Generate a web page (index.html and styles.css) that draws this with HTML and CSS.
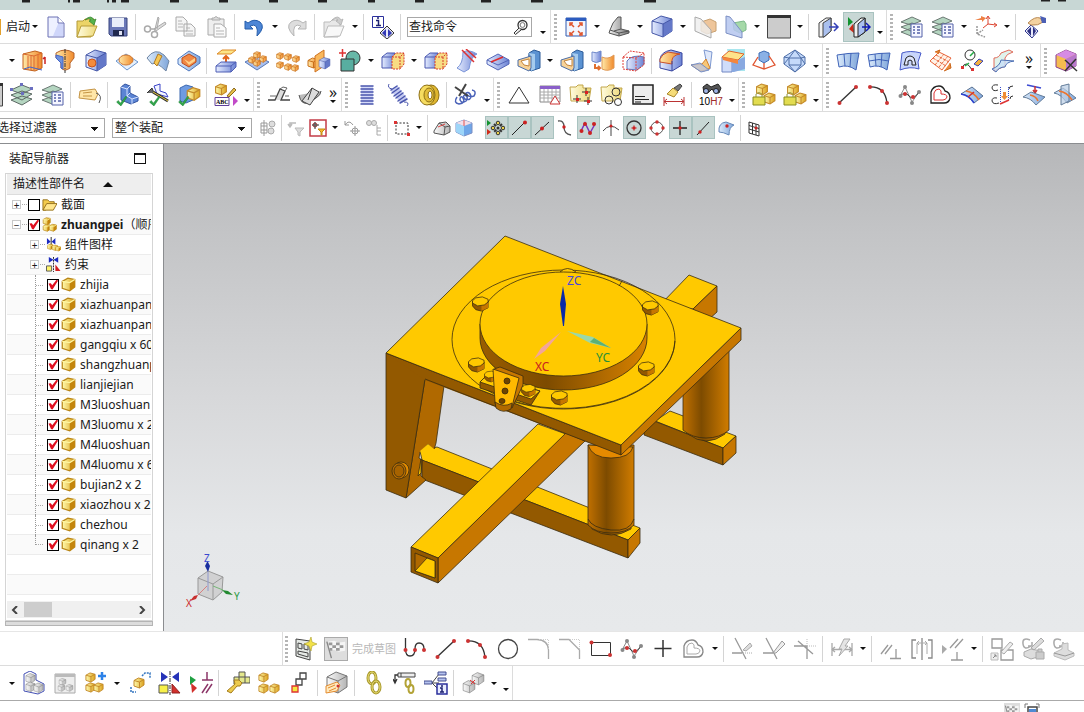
FILE: index.html
```html
<!DOCTYPE html>
<html lang="zh-CN">

<head>
    <meta charset="UTF-8">
    <title>装配</title>
    <link rel="stylesheet" href="styles.css">
</head>

<body>
    <svg class="sprite" aria-hidden="true">
        <defs>
            <linearGradient id="gb"><stop offset="0" stop-color="#e6edff"/><stop offset="1" stop-color="#6c83d4"/></linearGradient>
            <linearGradient id="gc"><stop offset="0" stop-color="#dcebfb"/><stop offset="1" stop-color="#7fa6da"/></linearGradient>
            <linearGradient id="gy"><stop offset="0" stop-color="#fffbb0"/><stop offset="1" stop-color="#dba21c"/></linearGradient>
            <linearGradient id="gf"><stop offset="0" stop-color="#fffce0"/><stop offset="1" stop-color="#edd978"/></linearGradient>
            <linearGradient id="go"><stop offset="0" stop-color="#ffe9a8"/><stop offset="1" stop-color="#f08a2c"/></linearGradient>
            <linearGradient id="gs"><stop offset="0" stop-color="#fafafa"/><stop offset="1" stop-color="#b5b5b5"/></linearGradient>
            <linearGradient id="gd"><stop offset="0" stop-color="#eeeeee"/><stop offset="1" stop-color="#777777"/></linearGradient>
            <linearGradient id="cyl"><stop offset="0" stop-color="#c07000"/><stop offset=".4" stop-color="#7d4b00"/><stop offset="1" stop-color="#d07c00"/></linearGradient>
            <linearGradient id="rim"><stop offset="0" stop-color="#9a5d00"/><stop offset=".4" stop-color="#7d4b00"/><stop offset="1" stop-color="#d88200"/></linearGradient>
        </defs>

        <!-- cubes, used by many of the other icons -->
        <symbol id="bc" viewBox="0 0 24 24"><path d="M2 6 11 1 22 4V16L13 22 2 18Z" fill="url(#gb)" stroke="#4658a8"/><path d="M13 9 22 4V16L13 22Z" fill="#6478c8"/><path d="M2 6 13 9 22 4M13 9V22" fill="none" stroke="#4658a8"/></symbol>
        <symbol id="yc" viewBox="0 0 24 24"><path d="M2 7 11 2 22 4V16L14 22 2 18Z" fill="url(#gy)" stroke="#b98616" stroke-width="2"/><path d="M14 9 22 4V16L14 22Z" fill="#c4850c"/><path d="M2 7 14 9 22 4" fill="none" stroke="#fff7a0" stroke-width="2"/></symbol>
        <symbol id="oc" viewBox="0 0 24 24"><path d="M2 7 11 2 22 5V16L13 22 2 18Z" fill="url(#go)" stroke="#c8701a" stroke-width="2"/><path d="M2 7 13 10 22 5M13 10V22" fill="none" stroke="#c8701a" stroke-width="2"/></symbol>
        <symbol id="pc" viewBox="0 0 24 24"><path d="M2 7 11 2 22 5V16L13 22 2 18Z" fill="url(#gy)" stroke="#c48a2a" stroke-width="2"/><path d="M2 7 13 10 22 5M13 10V22" fill="none" stroke="#c48a2a" stroke-width="2"/></symbol>
        <symbol id="sc" viewBox="0 0 24 24"><path d="M2 6 11 1 22 5V16L13 22 2 18Z" fill="url(#gs)" stroke="#777"/><path d="M2 6 13 10 22 5M13 10V22" fill="none" stroke="#777"/></symbol>
        <symbol id="mark" viewBox="0 0 24 24"><path d="M3 15 6 12 10 17 20 4 22 6 11 22Z" fill="#2fa84a" stroke="#1c7c33"/></symbol>

        <!-- standard bar -->
        <symbol id="new" viewBox="0 0 24 24"><path d="M4 2H14L20 8V22H4Z" fill="#eef1ff" stroke="#6a70b4"/><path d="M14 9 19 8V21H9Z" fill="#cfd6fa"/><path d="M14 2V8H20" fill="#fff" stroke="#6a70b4"/></symbol>
        <symbol id="open" viewBox="0 0 24 24"><path d="M2 6H8L10 4H19V12L16 22H2Z" fill="#ecd468" stroke="#b39a3a"/><path d="M6 11H22L18 21 2 22Z" fill="url(#gf)" stroke="#b89c38"/><path d="M10 5Q16-1 19 5L21 4 19 10 14 6 16 5Q14 2 10 5" fill="#56b24c" stroke="#327f2c" stroke-width=".7"/></symbol>
        <symbol id="save" viewBox="0 0 24 24"><path d="M3 3H21V21H5L3 19Z" fill="#6a78b8" stroke="#39457f"/><path d="M6 3H18V12H6Z" fill="#e9eefa"/><path d="M7 15H18V21H7Z" fill="#20294f"/><path d="M13 16H16V20H13Z" fill="#dfe3f4"/></symbol>
        <symbol id="cut" viewBox="0 0 24 24"><path d="M12 14 15 2 16 3 14 14M11 14 22 7 23 9 13 16" fill="#ddd" stroke="#aaa"/><circle cx="4.5" cy="14" r="3" fill="none" stroke="#aaa" stroke-width="1.5"/><circle cx="11.5" cy="19.5" r="3" fill="none" stroke="#aaa" stroke-width="1.5"/><path d="M7 14H12V17" fill="none" stroke="#aaa" stroke-width="1.5"/></symbol>
        <symbol id="copy" viewBox="0 0 24 24"><path d="M2 2H9L13 6V16H2ZM10 9H17L21 13V21H10Z" fill="#f5f5f5" stroke="#aaa"/><path d="M4 6H8M4 9H9M4 12H9M12 13H16M12 16H19M12 19H19" stroke="#b5b5b5"/></symbol>
        <symbol id="paste" viewBox="0 0 24 24"><path d="M3 4H19V20H3Z" fill="#eee" stroke="#aaa"/><path d="M7 5V3H9Q11 0 13 3H15V5Z" fill="#ddd" stroke="#aaa"/><path d="M9 9H16L21 13V22H9Z" fill="#fafafa" stroke="#aaa"/><path d="M11 13H15M11 16H19M11 19H19" stroke="#b5b5b5"/></symbol>
        <symbol id="undo" viewBox="0 0 24 24"><path d="M3 6V14H11L8 11Q17 7 15 21 24 12 18 7 12 3 6 8Z" fill="#4d86d6" stroke="#245caa"/></symbol>
        <symbol id="redo" viewBox="0 0 24 24"><path d="M21 6V14H13L16 11Q7 7 9 21 0 12 6 7 12 3 18 8Z" fill="#ddd" stroke="#b5b5b5"/></symbol>
        <symbol id="open-off" viewBox="0 0 24 24"><path d="M2 7H8L10 5H18V12L16 22H2Z" fill="#e8e8e8" stroke="#bbb"/><path d="M6 11H22L18 21 2 22Z" fill="#f8f8f8" stroke="#bbb"/><path d="M10 5Q16-1 19 5L21 4 19 10 14 6 16 5Q14 2 10 5" fill="#ccc" stroke="#aaa" stroke-width=".7"/></symbol>
        <symbol id="info" viewBox="0 0 24 24"><path d="M1.5 1.5H12.5V12.5H1.5Z" fill="#fff" stroke="#2a2f9c"/><path d="M5 5.5H7.500V10M5 10.5H10M6 3H8" fill="none" stroke="#1c2070" stroke-width="1.5"/><path d="M16 11 23 18 16 24 9 18Z" fill="#e6e8fa" stroke="#333"/><path d="M15 14V22L11 18ZM17 14V22L21 18Z" fill="#3238b4"/></symbol>
        <symbol id="find" viewBox="0 0 16 16"><circle cx="9.5" cy="6" r="4.5" fill="#fff" stroke="#333" stroke-width="1.3"/><circle cx="9.5" cy="6" r="2.4" fill="none" stroke="#777"/><path d="M6 9 1 14 2.5 15.5 8 11" fill="#eee" stroke="#333"/></symbol>
        <symbol id="fit" viewBox="0 0 24 24"><path d="M2 3H22V21H2Z" fill="#f2f5fd" stroke="#315bb0"/><path d="M2 3H22V6H2Z" fill="#2c5cc0"/><path d="M7 9 10 12M17 9 14 12M7 19 10 16M17 19 14 16M6 11V8H9M15 8H18V11M6 17V20H9M15 20H18V17" fill="none" stroke="#e0542c" stroke-width="1.5"/></symbol>
        <symbol id="shade" viewBox="0 0 24 24"><path d="M3 15 6 8 11 2 14 2V14L22 16V18L12 21 2 18Z" fill="url(#gd)" stroke="#555"/><path d="M3 15 12 18 22 16M14 14 7 16M12 18V21" fill="none" stroke="#555"/></symbol>
        <symbol id="clip" viewBox="0 0 24 24"><path d="M8 7 17 4 23 7V16L14 19 8 16Z" fill="#eec59a" stroke="#c8a070"/><path d="M2 2 8 4 18 15V23L2 16Z" fill="#eee" fill-opacity=".8" stroke="#aaa"/></symbol>
        <symbol id="clip2" viewBox="0 0 24 24"><path d="M9 8 20 6 22 9V15L16 18 10 15Z" fill="#a5d9a8" stroke="#7db98a"/><path d="M2 1 6 2 18 17V23L2 18Z" fill="#b5c5ee" fill-opacity=".85" stroke="#7d90c4"/></symbol>
        <symbol id="window" viewBox="0 0 24 24"><path d="M.5 1H23.5V23H.5Z" fill="#ccc" stroke="#444"/><path d="M0 0H24V3H0Z" fill="#333"/></symbol>
        <symbol id="plane" viewBox="0 0 24 24"><path d="M3 8 10 3H15V16L8 22H3Z" fill="#f0f0f0" stroke="#444"/><path d="M7 8 15 3V16L8 22H7Z" fill="#aac0ee" stroke="#444"/><path d="M13 12H22M18 8 22 12 18 16" fill="none" stroke="#3440b8" stroke-width="1.5"/></symbol>
        <symbol id="plane-on" viewBox="0 0 24 24"><path d="M1 2 6 7 1 11Z" fill="#12932f"/><path d="M6 9 2 14 7 18Z" fill="#d02a18"/><path d="M7 9 14 3H18V17L11 22H7Z" fill="#f0f0f0" stroke="#222"/><path d="M11 9 18 3V17L11 22Z" fill="#aac0ee" stroke="#222"/><path d="M15 12H23M19 8 23 12 19 16" fill="none" stroke="#1018b8" stroke-width="1.5"/></symbol>
        <symbol id="layers" viewBox="0 0 24 24"><path d="M1 17 12 13 21 16 11 21ZM1 12 12 8 21 11 11 16ZM1 7 12 2 21 6 11 10Z" fill="#b4d5c0" stroke="#6c7974"/><path d="M11 9H22V22H11Z" fill="#f5f6ff" stroke="#5360a8"/><path d="M13 12H15M13 15H15M13 18H15M17 12H20M17 15H20M17 18H20" stroke="#5360a8" stroke-width="1.5"/></symbol>
        <symbol id="stack" viewBox="0 0 24 24"><path d="M1 17 12 13 22 16 12 22ZM1 12 12 8 22 11 12 17ZM1 7 12 2 22 6 12 11Z" fill="#b4d5c0" stroke="#5c6964"/><path d="M0 5H3V8H0ZM10 0H13V3H10ZM20 4H23V7H20ZM11 9H14V12H11Z" fill="#6a6fc0"/></symbol>
        <symbol id="csys" viewBox="0 0 24 24"><path d="M14 2V9L22 10M14 9 9 13M12 4 14 1 16 4M20 8 23 10 20 12" fill="none" stroke="#dc4430"/><path d="M3 11V19L11 22M3 19 9 15" fill="none" stroke="#999" stroke-width="1.5" stroke-dasharray="2 1"/><path d="M1 5 7 3V1L12 3 8 7V5Z" fill="#ee8044"/></symbol>
        <symbol id="touch" viewBox="0 0 24 24"><path d="M8 10 15 16 9 23 2 16Z" fill="#e9ebfc" stroke="#333a90"/><path d="M8 12V21L4 16ZM10 12V21L13 16Z" fill="#2c3080"/><path d="M5 8Q12 1 17 3L20 7Q15 11 8 10Z" fill="#f4d2a0" stroke="#b98a55"/><path d="M17 1 23 3V8L19 8Z" fill="#4c5fb4"/></symbol>

        <!-- feature bar -->
        <symbol id="extrude" viewBox="0 0 24 24"><path d="M1 5 13 2 20 4V19L13 22 1 20Z" fill="url(#go)" stroke="#c2601c"/><path d="M1 5 12 7 20 4M6 7V21M9 7V21M12 7V21M16 6V20" fill="none" stroke="#dc6830"/><path d="M2 20 8 18 20 21" stroke="#4464c8" fill="none"/><path d="M23 15V8M21 10 23 8" stroke="#c22" stroke-width="1.5"/></symbol>
        <symbol id="revolve" viewBox="0 0 24 24"><path d="M3 4Q12-2 21 4V9L17 14V19Q12 23 8 19V14L3 9Z" fill="url(#go)" stroke="#b8642b"/><path d="M3 6 10 8V20L8 19V14L3 9Z" fill="#6f92dc" stroke="#4464c8"/><path d="M12 0V24" stroke="#333" stroke-dasharray="4 1 1 1"/></symbol>
        <symbol id="hole" viewBox="0 0 24 24"><use href="#bc"/><circle cx="8" cy="14" r="4" fill="#f58c3c" stroke="#c9541c"/></symbol>
        <symbol id="boss" viewBox="0 0 24 24"><path d="M1 12 11 5 23 13 12 21Z" fill="#e4f0fd" stroke="#6a94cc"/><ellipse cx="11" cy="11" rx="7" ry="5" fill="url(#go)" stroke="#d07830"/></symbol>
        <symbol id="slot" viewBox="0 0 24 24"><path d="M1 9Q9-2 18 6L23 12 20 22Q10 12 6 15Z" fill="url(#gc)" stroke="#6f86a4"/><path d="M12 5 16 7 11 17 8 14Z" fill="#f7c752" stroke="#ae7a22"/></symbol>
        <symbol id="emboss" viewBox="0 0 24 24"><path d="M1 10 12 2 23 8V14L12 22 1 15Z" fill="url(#gc)" stroke="#4f78c0"/><path d="M5 9 12 5 19 9V13L12 18 5 14Z" fill="#f08844" stroke="#c04c1c"/><path d="M7 10 12 13 18 9V12L12 16Z" fill="#ffd288"/></symbol>
        <symbol id="offset" viewBox="0 0 24 24"><path d="M3 5 8 1H22L17 5Z" fill="#fce486" stroke="#dd8a28"/><path d="M12 15V8M9 10 12 7 15 10" fill="none" stroke="#e2651c" stroke-width="2"/><path d="M2 17 7 13H22V18L17 23H2Z" fill="url(#gb)" stroke="#4f5fb5"/><path d="M2 17H17L22 13M17 17V23" fill="none" stroke="#4f5fb5"/></symbol>
        <symbol id="pattern" viewBox="0 0 24 24"><path d="M0 13 12 7 24 13 12 21Z" fill="#a9c0ee" stroke="#5878b8"/><use href="#oc" x="8" y="2" width="8" height="8"/><use href="#oc" x="3" y="7" width="8" height="8"/><use href="#oc" x="14" y="6" width="8" height="8"/><use href="#oc" x="8" y="10" width="8" height="8"/></symbol>
        <symbol id="array" viewBox="0 0 24 24"><use href="#oc" x="0" y="3" width="8" height="8"/><use href="#oc" x="8" y="4" width="8" height="8"/><use href="#oc" x="16" y="6" width="8" height="8"/><use href="#oc" x="0" y="12" width="8" height="8"/><use href="#oc" x="8" y="14" width="8" height="8"/><use href="#oc" x="15" y="15" width="8" height="8"/></symbol>
        <symbol id="mirror" viewBox="0 0 24 24"><use href="#oc" x="0" y="8" width="12" height="12"/><path d="M8 7 17 1V17L8 23Z" fill="#f9b85c" stroke="#cf7220"/><use href="#bc" x="11" y="8" width="13" height="13"/></symbol>
        <symbol id="unite" viewBox="0 0 24 24"><circle cx="15" cy="9" r="7" fill="#68b8a8" stroke="#333"/><path d="M3 10H16V22H3Z" fill="#58aea0" stroke="#333"/><path d="M1 4H8M4.5 0V8" stroke="#d33" stroke-width="1.5"/></symbol>
        <symbol id="trim" viewBox="0 0 24 24"><path d="M1 8 6 4H14V19H1Z" fill="url(#gb)" stroke="#4a58b0"/><path d="M1 8H12" stroke="#4a58b0"/><path d="M11 8 15 4H23V15L19 20H11Z" fill="#f8dc83" stroke="#d63c2c" stroke-dasharray="2 1"/><path d="M11 8H19L23 4M19 8V20" fill="none" stroke="#d63c2c" stroke-dasharray="2 1"/></symbol>
        <symbol id="split" viewBox="0 0 24 24"><path d="M8 3Q14 0 22 5 16 7 14 20L9 23 2 19Q8 15 8 3Z" fill="url(#gb)" stroke="#7a94d8"/><path d="M7 1 19 13M11 0 21 9" stroke="#d33" stroke-width="1.5"/></symbol>
        <symbol id="divide" viewBox="0 0 24 24"><path d="M1 11 12 5 23 11V15L12 21 1 15Z" fill="url(#gb)" stroke="#5366b8"/><path d="M1 11 12 16 23 11" fill="none" stroke="#5366b8"/><path d="M5 13 17 8" stroke="#e02a2a" stroke-width="1.5"/></symbol>
        <symbol id="shell" viewBox="0 0 24 24"><path d="M12 4 17 1 23 3V19L14 22 11 18Z" fill="#5b92d2" stroke="#2c5b98"/><path d="M12 4 18 5V20L14 22V10Z" fill="#a5cbee"/><path d="M1 11 14 7V19L12 22 1 17Z" fill="#f7d298" stroke="#4b6ea8"/><path d="M4 12 12 10V17L7 16Z" fill="#fff" stroke="#c2843c"/></symbol>
        <symbol id="thicken" viewBox="0 0 24 24"><path d="M1 3Q5 5 10 2V12Q5 15 1 12Z" fill="url(#gb)" stroke="#6e88ca"/><path d="M11 8Q17 11 23 6V19Q17 23 11 20Z" fill="url(#go)" stroke="#e09a58"/><path d="M4 15V19H9M7 17 9 19 7 21" fill="none" stroke="#e07030" stroke-width="2"/></symbol>
        <symbol id="scale" viewBox="0 0 24 24"><path d="M5 12Q10 5 22 8V15L15 21 5 20Z" fill="url(#gb)" stroke="#6478ba"/><path d="M1 8 8 2 22 4V16L15 21M1 8 14 9 22 4M1 8V20L14 22V9" fill="none" stroke="#e0403a" stroke-dasharray="2 1"/></symbol>
        <symbol id="blend" viewBox="0 0 24 24"><path d="M1 10Q2 3 12 1L23 4V16L13 22 1 19Z" fill="url(#gb)" stroke="#3946a0"/><path d="M1 13V10Q3 5 9 3L21 5Q14 6 13 11V15Z" fill="url(#go)" stroke="#c8502c"/><path d="M13 12V22" stroke="#3946a0"/></symbol>
        <symbol id="face" viewBox="0 0 24 24"><path d="M14 1 22 3 20 20 12 21 16 11Z" fill="#dfe8fa" stroke="#7d98d0"/><path d="M1 16 12 15 16 10 20 19Q14 23 10 22Z" fill="#f8c777" stroke="#d38128"/><path d="M1 16 10 14 19 21 11 23Z" fill="#b7c8ee" fill-opacity=".7" stroke="#7590c8"/></symbol>
        <symbol id="chamfer" viewBox="0 0 24 24"><path d="M6 0H24V22H10Z" fill="#a8e6ee"/><path d="M1 8 11 11V23H1Z" fill="#d0ddfa" stroke="#7288c4"/><path d="M11 13 24 8V20L13 23H11Z" fill="#89a9e0"/><path d="M1 8 8 2 23 5 17 11Z" fill="#ffe38a" stroke="#e0652c"/><path d="M1 8 17 11V15L2 11Z" fill="#f5863c"/></symbol>
        <symbol id="draft" viewBox="0 0 24 24"><path d="M7 4 12 2 17 4V11L12 14 7 11Z" fill="#8ab1e6" stroke="#3d6cb4"/><path d="M6 8 1 16 12 20 23 16 17 7M12 14V20" fill="none" stroke="#e05530" stroke-width="1.3"/></symbol>
        <symbol id="gem" viewBox="0 0 24 24"><path d="M12 1 22 8V15L12 23 1 15V8Z" fill="#c5dafa" stroke="#4f6fa8"/><path d="M6 9H18V16H6ZM12 1 6 9 1 15M12 1 18 9 22 15M6 16 12 23 18 16M1 8 6 9M22 8 18 9" fill="none" stroke="#4f6fa8"/></symbol>

        <!-- surface bar -->
        <symbol id="ruled" viewBox="0 0 24 24"><path d="M1 6Q12 4 23 4L20 21Q12 15 3 18Z" fill="url(#gc)" stroke="#3f63b8"/><path d="M8 5 9 17M15 4 14 18" stroke="#3f63b8"/></symbol>
        <symbol id="mesh" viewBox="0 0 24 24"><path d="M1 6Q12 4 23 4L20 21Q12 15 3 18Z" fill="url(#gc)" stroke="#3f63b8"/><path d="M8 5 9 17M15 4 14 18M2 12Q12 9 22 12" fill="none" stroke="#3f63b8"/></symbol>
        <symbol id="nside" viewBox="0 0 24 24"><path d="M4 4Q12 1 23 4L20 13 21 20Q12 17 2 21Z" fill="#c9d6fb" stroke="#4558c8"/><path d="M6 16 8 9Q12 5 16 9L18 16H14V12Q12 10 10 12V16Z" fill="#dde4fb" stroke="#222"/></symbol>
        <symbol id="sweep" viewBox="0 0 24 24"><path d="M1 12 10 3 22 9 13 21Z" fill="#fff3e8" stroke="#e8653a"/><path d="M4 9 17 17M7 6 20 13M6 16 15 5M10 18 19 7" stroke="#e8653a" stroke-dasharray="3 1"/><path d="M6 3 11 1 9 5M15 22 22 19 21 14" fill="#eb8a38" stroke="#c96418"/></symbol>
        <symbol id="curves" viewBox="0 0 24 24"><circle cx="10" cy="6" r="5" fill="#fff" stroke="#333"/><path d="M2 19Q6 10 12 21" fill="none" stroke="#333"/><path d="M10 7 14 3M5 17 9 14" stroke="#22aa44" stroke-width="1.5"/><path d="M14 15 19 10 23 12 18 17Z" fill="#f3b13e" stroke="#3844b8"/><path d="M1 17H4V20H1ZM11 19H14V22H11Z" fill="#d33"/></symbol>
        <symbol id="joins" viewBox="0 0 24 24"><path d="M3 9Q8 9 10 4L18 1 22 3Q15 5 14 9V17L3 22Z" fill="#e0f3ec" stroke="#e06b5a"/><path d="M1 20Q9 17 10 11L23 12Q15 13 14 18Q8 18 5 23Z" fill="#c7def7" fill-opacity=".8" stroke="#4d70b4"/></symbol>
        <symbol id="remove" viewBox="0 0 24 24"><path d="M2 6 12 1 22 5V17L12 22 2 18Z" fill="#f5bc50" stroke="#8a3f90"/><path d="M2 6 12 1 22 5 12 10Z" fill="#d68be4"/><path d="M12 10 22 5V17L12 22Z" fill="#b978cc"/><path d="M11 11 23 22M22 10 11 22" stroke="#333" stroke-width="1.5"/></symbol>

        <!-- tools and gears bar -->
        <symbol id="tag" viewBox="0 0 24 24"><path d="M2 8 17 6 20 11 17 17 1 15Z" fill="#ffe6a8" stroke="#c49445"/><path d="M5 10 14 9M5 13 14 13" stroke="#c49445"/><path d="M18 10Q25 12 21 20" fill="none" stroke="#555"/></symbol>
        <symbol id="check1" viewBox="0 0 24 24"><path d="M6 4 10 1 15 3V10L23 14V18L16 21 6 17Z" fill="#5b84d4" stroke="#3555a0"/><path d="M6 4 12 6V13L17 16V21M12 6 15 3M12 13 15 10M17 16 23 14" fill="none" stroke="#d5e2ff"/><use href="#mark" x="0" y="11" width="13" height="13"/></symbol>
        <symbol id="check2" viewBox="0 0 24 24"><path d="M8 3 14 1V8L20 10 22 14 11 11Z" fill="#f3f5ff" stroke="#3b44c8"/><path d="M1 10 6 5 8 10" fill="#666" stroke="#333"/><path d="M7 9 22 18" stroke="#333" stroke-width="3"/><path d="M7 9 22 18" stroke="#ddc23c"/><use href="#mark" x="2" y="11" width="13" height="13"/></symbol>
        <symbol id="check3" viewBox="0 0 24 24"><path d="M3 5 9 2 16 4V17L9 20 3 18Z" fill="#6e9be2" stroke="#3b68b0"/><use href="#pc" x="9" y="1" width="15" height="20"/><use href="#mark" x="0" y="11" width="13" height="13"/></symbol>
        <symbol id="abc" viewBox="0 0 24 24"><use href="#pc" x="0" y="0" width="14" height="13"/><path d="M1 14.5H15V22.5H1Z" fill="#fff" stroke="#60409c"/><text x="2" y="21" class="abc">ABC</text><path d="M13 13 20 5 22 7 15 14Z" fill="#e8c048" stroke="#8a6820"/><path d="M19 13 24 18 19 23Z" fill="#c24ac8"/></symbol>
        <symbol id="bend1" viewBox="0 0 24 24"><path d="M1 17H8L13 6 18 8 14 17H23" fill="#ddd" stroke="#444" stroke-width="1.3"/><path d="M13 6 16 4 20 5 18 8M3 13H9M18 13H22" fill="none" stroke="#666"/></symbol>
        <symbol id="bend2" viewBox="0 0 24 24"><path d="M1 12Q3 22 10 20L18 15Q23 12 23 8" fill="#bbb" stroke="#555"/><path d="M7 14 14 5 21 9 12 22 4 18Z" fill="#ddd" stroke="#444"/><path d="M14 5 10 17" stroke="#444"/></symbol>
        <symbol id="spring" viewBox="0 0 24 24"><path d="M6 3H18V21H6Z" fill="#d5daf8"/><path d="M6 3H18M6 6H18M6 9H18M6 12H18M6 15H18M6 18H18M6 21H18" stroke="#4a56ad" stroke-width="1.5" stroke-linecap="round"/></symbol>
        <symbol id="coil" viewBox="0 0 24 24"><path d="M8 5 18 18" stroke="#c4caf0" stroke-width="8"/><path d="M5 7 11 3M6 10 13 5M8 13 15 8M10 15 17 10M12 18 19 13M14 20 21 16" stroke="#4a56ad" stroke-width="1.5" stroke-linecap="round"/><path d="M6 6Q1 5 3 1M18 19Q24 19 21 23" fill="none" stroke="#4a56ad"/></symbol>
        <symbol id="disc" viewBox="0 0 24 24"><ellipse cx="14" cy="12" rx="8" ry="10" fill="#dfb62e" stroke="#8d6f14"/><ellipse cx="10" cy="12" rx="8" ry="10" fill="#f6dc60" stroke="#8d6f14"/><ellipse cx="12" cy="12" rx="5" ry="7" fill="#e2bd38" stroke="#8d6f14"/><ellipse cx="13" cy="12" rx="2" ry="4" fill="#fff" stroke="#8d6f14"/></symbol>
        <symbol id="cutcoil" viewBox="0 0 24 24"><path d="M3 14Q-1 20 5 21 12 20 9 15 6 12 6 17 8 21 12 18 15 14 11 12 8 13 11 16 17 18 17 13 15 8 12 10 14 15 20 13 23 8 18 7" fill="none" stroke="#4a62b8" stroke-width="1.5"/><path d="M1 4 14 13M12 1 5 13" stroke="#444" stroke-width="2"/></symbol>
        <symbol id="tri" viewBox="0 0 24 24"><path d="M12 4 22 20H2Z" fill="#fff" stroke="#333"/></symbol>
        <symbol id="table" viewBox="0 0 24 24"><path d="M2 3H22V19H2Z" fill="#fff" stroke="#888"/><path d="M2 3H22V6H2Z" fill="#8a5fc8"/><path d="M2 9H22M2 12H22M2 15H22M6 6V19M10 6V19M14 6V19M18 6V19" stroke="#aaa"/><path d="M17 13 22 21H12Z" fill="#fff" stroke="#c33"/></symbol>
        <symbol id="pts" viewBox="0 0 24 24"><path d="M1 4H7L9 2H14V5H22L20 18H2Z" fill="url(#gf)" stroke="#c2a64a"/><path d="M4 16H12M8 12V20M13 9H21M17 5V13M15 18H23M19 14V22" stroke="#333"/><path d="M7 15H10V18H7ZM16 8H19V11H16ZM18 17H21V20H18Z" fill="#d22"/></symbol>
        <symbol id="circles" viewBox="0 0 24 24"><path d="M1 4H7L9 2H14V5H22L20 18H2Z" fill="url(#gf)" stroke="#c2a64a"/><circle cx="16" cy="9" r="4" fill="none" stroke="#333"/><circle cx="9" cy="17" r="4" fill="none" stroke="#333"/><circle cx="18" cy="19" r="3.5" fill="#fff" stroke="#333"/></symbol>
        <symbol id="note" viewBox="0 0 24 24"><path d="M2 2H22V21H2Z" fill="#ececec" stroke="#222" stroke-width="1.5"/><path d="M4 13.5H14M4 16.5H18M4 19H10" stroke="#222"/></symbol>
        <symbol id="dim" viewBox="0 0 24 24"><path d="M12 5 18 1 20 3 16 8Z" fill="#777" stroke="#444"/><path d="M11 5 16 9 12 14 5 11Z" fill="#f5dc78" stroke="#a8862a"/><path d="M2 14V23M22 14V23M2 18.5H22M5 16 2 18.5 5 21M19 16 22 18.5 19 21" fill="none" stroke="#b33"/></symbol>
        <symbol id="fit10" viewBox="0 0 24 24"><path d="M4 4 8 1 12 4 19 1 22 5 20 10 16 10 13 6 9 10H5Z" fill="#555" stroke="#222"/><circle cx="7" cy="8" r="2.5" fill="#9fb5e8" stroke="#222"/><circle cx="17" cy="8" r="2.5" fill="#9fb5e8" stroke="#222"/><text x="0" y="22" class="fit">10<tspan fill="#a02c2c">H7</tspan></text></symbol>
        <symbol id="lock" viewBox="0 0 24 24"><use href="#pc" x="3" y="0" width="14" height="13"/><use href="#pc" x="11" y="9" width="13" height="13"/><path d="M4 14V11Q7 8 10 11V14" fill="none" stroke="#999a40"/><path d="M1 14H13V22H1Z" fill="#e2dc50" stroke="#888a20"/></symbol>

        <!-- curve bar -->
        <symbol id="line" viewBox="0 0 24 24"><path d="M3 20 20 4" stroke="#333" stroke-width="1.3"/><circle cx="3.5" cy="20" r="2" fill="#c33"/><circle cx="20" cy="4" r="2" fill="#c33"/></symbol>
        <symbol id="arc" viewBox="0 0 24 24"><path d="M2 4Q18 3 20 20" fill="none" stroke="#333" stroke-width="1.3"/><circle cx="3" cy="4" r="2" fill="#c33"/><circle cx="15" cy="8" r="2" fill="#c33"/><circle cx="20" cy="20" r="2" fill="#c33"/></symbol>
        <symbol id="spline" viewBox="0 0 24 24"><path d="M2 13 7 4 14 19 21 9" fill="none" stroke="#888"/><path d="M2 13Q7 8 11 13T21 9" fill="none" stroke="#333"/><circle cx="2.5" cy="13" r="2" fill="#888"/><circle cx="7" cy="4" r="2" fill="#888"/><circle cx="14" cy="20" r="2" fill="#888"/><circle cx="21" cy="9" r="2" fill="#888"/><circle cx="7" cy="11" r="2" fill="#c33"/><circle cx="15" cy="14" r="2" fill="#c33"/></symbol>
        <symbol id="loop" viewBox="0 0 24 24"><path d="M2 9Q4 3 10 3 14 3 16 8 21 9 21 15 20 20 15 20H2Z" fill="none" stroke="#222" stroke-width="1.3"/><path d="M5 10Q6 6 10 6 13 7 12 11 18 11 18 14 17 17 14 17H5Z" fill="none" stroke="#d33"/></symbol>
        <symbol id="loop-off" viewBox="0 0 24 24"><path d="M2 9Q4 3 10 3 14 3 16 8 21 9 21 15 20 20 15 20H2Z" fill="none" stroke="#888" stroke-width="1.3"/><path d="M5 10Q6 6 10 6 13 7 12 11 18 11 18 14 17 17 14 17H5Z" fill="none" stroke="#aaa"/></symbol>
        <symbol id="midcurve" viewBox="0 0 24 24"><path d="M1 11 12 4 23 13 14 20Q9 12 1 11Z" fill="url(#gc)" stroke="#566f90"/><path d="M6 8Q14 9 19 17" fill="none" stroke="#ee742c" stroke-width="1.5"/><path d="M1 11Q9 12 14 20" fill="none" stroke="#2c42d0" stroke-width="1.5"/><path d="M8 14 14 9" stroke="#c33" stroke-width="1.5"/></symbol>
        <symbol id="bridge" viewBox="0 0 24 24"><path d="M7 2Q1 1 1 5 2 9 7 7M22 3Q18 3 18 6M6 15Q1 14 1 18 2 22 8 20M22 13Q19 13 19 16" fill="none" stroke="#333"/><path d="M9.500 4V20M17.500 4V17" stroke="#334acb" stroke-dasharray="1 1"/><path d="M12 9H15V13H17L13.5 17 10 13H12Z" fill="#ef8c38"/><path d="M9 21 18 17" stroke="#d33" stroke-width="1.5"/></symbol>
        <symbol id="project" viewBox="0 0 24 24"><path d="M5 2 19 5" stroke="#3b4bd2" stroke-width="1.5"/><path d="M13 3V9M11 7 13 10 15 7" fill="none" stroke="#c33" stroke-width="1.5"/><path d="M1 14 9 9 23 14 14 22Q9 15 1 14Z" fill="url(#gc)" stroke="#637c99"/><path d="M8 12Q14 13 16 18" fill="none" stroke="#ee742c" stroke-width="1.5"/></symbol>
        <symbol id="section" viewBox="0 0 24 24"><path d="M1 10 10 5 23 15 14 20Q8 11 1 10Z" fill="url(#gc)" stroke="#637c99"/><path d="M8 3 16 1V18L8 22Z" fill="#b9cde4" fill-opacity=".7" stroke="#637c99"/><path d="M6 8Q14 9 19 17" fill="none" stroke="#ee742c" stroke-width="1.5"/></symbol>

        <!-- selection bar -->
        <symbol id="gears-off" viewBox="0 0 18 18"><path d="M2 4H8V14H2ZM2 7H8M2 11H8M5 1V17" fill="none" stroke="#999"/><circle cx="13" cy="5" r="3" fill="#ddd" stroke="#aaa"/><circle cx="12" cy="12" r="3" fill="#ddd" stroke="#aaa"/></symbol>
        <symbol id="filter-off" viewBox="0 0 18 18"><path d="M3 7V4H9M1 5 3 8 5 5" fill="none" stroke="#bbb" stroke-width="1.5"/><path d="M8 9H17L13 13V17L11 16V13Z" fill="#ddd" stroke="#bbb"/></symbol>
        <symbol id="filter" viewBox="0 0 18 18"><path d="M1 1H17V17H1Z" fill="#fff" stroke="#c33c48" stroke-width="1.5"/><circle cx="6" cy="6" r="2" fill="none" stroke="#a33"/><path d="M6 3V10M3 6H10" stroke="#333"/><path d="M9 10H16L13 13V16H12V13Z" fill="#f7b92c" stroke="#c48a12"/></symbol>
        <symbol id="back-off" viewBox="0 0 18 18"><path d="M2 2V6H6M2 6Q6 0 10 6M12 7V17M7 12H17" fill="none" stroke="#999"/><circle cx="12" cy="12" r="3" fill="none" stroke="#999"/></symbol>
        <symbol id="tree-off" viewBox="0 0 18 18"><circle cx="4" cy="4" r="2.5" fill="#ddd" stroke="#aaa"/><circle cx="9" cy="4" r="2.5" fill="#ddd" stroke="#aaa"/><path d="M12 6V16M12 9H16M12 12H16M12 16H16" stroke="#aaa"/></symbol>
        <symbol id="marquee" viewBox="0 0 18 18"><path d="M3 4H15V15H3Z" fill="none" stroke="#333" stroke-dasharray="2 1.5"/><path d="M1 2H4V5H1ZM14 14H17V17H14Z" fill="#d33"/></symbol>
        <symbol id="obj" viewBox="0 0 18 18"><path d="M1 12 6 4 13 3 17 7V13L11 16 1 14Z" fill="url(#gs)" stroke="#555"/><path d="M6 4 12 8 11 16M12 8 17 7" fill="none" stroke="#555"/><path d="M5 8 12 5" stroke="#d44"/></symbol>
        <symbol id="pick" viewBox="0 0 18 18"><path d="M1 4 9 1 17 4V14L9 17 1 13Z" fill="#6fa6e8" stroke="#7d8fc4"/><path d="M1 4 9 7V17L1 13Z" fill="#9dd5f8"/><path d="M1 4 9 1 17 4 9 7Z" fill="#f2dde8"/><path d="M9 1V7" stroke="#d55"/></symbol>
        <symbol id="snap-on" viewBox="0 0 18 18"><path d="M0 1 4 4 0 7Z" fill="#12932f"/><path d="M0 10 4 13 0 16Z" fill="#d02a18"/><g fill="#ecd24a" stroke="#333"><circle cx="11" cy="4" r="1.8"/><circle cx="11" cy="14" r="1.8"/><circle cx="6" cy="9" r="1.8"/><circle cx="16" cy="9" r="1.8"/></g><path d="M7 5 15 13M15 5 7 13" stroke="#333" stroke-width="2" stroke-dasharray="3 5"/><circle cx="11" cy="9" r="1.5" fill="#333"/></symbol>
        <symbol id="s-end" viewBox="0 0 18 18"><path d="M2 16 15 3" stroke="#222"/><circle cx="15" cy="3.5" r="2" fill="#c22"/></symbol>
        <symbol id="s-mid" viewBox="0 0 18 18"><path d="M2 16 16 3" stroke="#222"/><circle cx="9" cy="9.5" r="2" fill="#c22"/></symbol>
        <symbol id="s-ctrl" viewBox="0 0 18 18"><path d="M2 2Q8 1 8 8T15 16" fill="none" stroke="#555" stroke-width="1.3"/><circle cx="8" cy="8" r="1.7" fill="#c22"/></symbol>
        <symbol id="s-pole" viewBox="0 0 18 18"><path d="M2 12 6 4 11 14 16 5" fill="none" stroke="#7a34bd" stroke-width="1.5"/><g fill="#c22"><circle cx="2.5" cy="12" r="2"/><circle cx="6" cy="5" r="2"/><circle cx="11" cy="14" r="2"/><circle cx="15" cy="5" r="2"/></g></symbol>
        <symbol id="s-int" viewBox="0 0 18 18"><path d="M1 12Q8 3 17 11M9 1V17" fill="none" stroke="#444"/><circle cx="9" cy="7" r="1.5" fill="#c22"/></symbol>
        <symbol id="s-cen" viewBox="0 0 18 18"><circle cx="9" cy="9" r="7" fill="none" stroke="#333" stroke-width="1.3"/><circle cx="9" cy="9" r="1.7" fill="#c22"/><path d="M9 6V12M6 9H12" stroke="#c22" stroke-width=".6"/></symbol>
        <symbol id="s-quad" viewBox="0 0 18 18"><circle cx="9" cy="9" r="6" fill="none" stroke="#555"/><g fill="#c33"><circle cx="9" cy="3" r="1.7"/><circle cx="9" cy="15" r="1.7"/><circle cx="3" cy="9" r="1.7"/><circle cx="15" cy="9" r="1.7"/></g></symbol>
        <symbol id="s-pt" viewBox="0 0 18 18"><path d="M9 2V16M2 9H16" stroke="#222" stroke-width="1.3"/><circle cx="9" cy="9" r="1.7" fill="#c22"/></symbol>
        <symbol id="s-on" viewBox="0 0 18 18"><path d="M3 16 15 3" stroke="#222"/><circle cx="6" cy="13" r="1.7" fill="#c22"/></symbol>
        <symbol id="s-face" viewBox="0 0 18 18"><path d="M2 13Q1 4 9 3L17 6Q12 8 12 16Q6 13 2 13Z" fill="url(#gc)" stroke="#6588b8"/><circle cx="10" cy="7" r="1.7" fill="#c22"/></symbol>
        <symbol id="s-grid" viewBox="0 0 18 18"><path d="M3 3 13 6V17L3 14ZM6.500 4V15M10 5V16M3 6.500 13 9.500M3 10 13 13" fill="none" stroke="#333"/><circle cx="10" cy="9" r="1.5" fill="#c22"/></symbol>

        <!-- sketch bar -->
        <symbol id="sketch" viewBox="0 0 24 24"><path d="M3 2 17 4V23L3 19ZM5 6 9 7V12L5 11ZM11 7 15 8V13L11 12ZM5 14 15 16V20L5 17Z" fill="#e5e9e5" stroke="#444"/><path d="M18 0 19 5 24 7 19 9 18 14 16 9 11 7 16 5Z" fill="#f2e24a" stroke="#ac9f28" stroke-width=".6"/></symbol>
        <symbol id="flag-off" viewBox="0 0 24 24"><path d="M0 0H24V24H0Z" fill="#ddd"/><path d="M3 4 10 3 15 5 22 4V14L15 15 10 13 5 14Z" fill="#f5f5f5"/><path d="M4 5H8V8H4ZM12 5H16V8H12ZM8 8H12V11H8ZM16 8H20V11H16ZM12 11H16V14H12ZM5 11H8V14H5Z" fill="#999"/><path d="M2 4 7 22" stroke="#888" stroke-width="1.5"/></symbol>
        <symbol id="profile" viewBox="0 0 24 24"><path d="M2.500 1V12Q2.500 19 7 19 12 19 12 12 12 6 16 6 21 6 21 12V14" fill="none" stroke="#333" stroke-width="1.3"/><circle cx="2.5" cy="13" r="2" fill="#c33"/><circle cx="12" cy="13" r="2" fill="#c33"/><circle cx="21" cy="13" r="2" fill="#c33"/></symbol>
        <symbol id="circle" viewBox="0 0 24 24"><circle cx="12" cy="12" r="9.5" fill="none" stroke="#444" stroke-width="1.3"/></symbol>
        <symbol id="fillet-off" viewBox="0 0 24 24"><path d="M1 2.5H10Q21 3 21.5 13V22" fill="none" stroke="#aaa" stroke-width="1.3"/><path d="M12 2.5H21.5V12" fill="none" stroke="#ccc" stroke-dasharray="1 1"/></symbol>
        <symbol id="cham-off" viewBox="0 0 24 24"><path d="M1 2.5H11L21.5 13V22" fill="none" stroke="#aaa" stroke-width="1.3"/><path d="M12 2.5H21.5V12" fill="none" stroke="#ccc" stroke-dasharray="1 1"/></symbol>
        <symbol id="rect" viewBox="0 0 24 24"><path d="M2.500 5.500H21.500V18.500H2.500Z" fill="none" stroke="#333"/><circle cx="2.5" cy="5.5" r="2" fill="#c33"/><circle cx="21" cy="18" r="2" fill="#c33"/></symbol>
        <symbol id="point" viewBox="0 0 24 24"><path d="M12 3V20M3.5 11.5H20.5" stroke="#333" stroke-width="1.5"/></symbol>
        <symbol id="qtrim" viewBox="0 0 24 24"><path d="M4 1 15 22M1 16H11" stroke="#999" stroke-width="1.3"/><path d="M12 16H22" stroke="#aaa" stroke-dasharray="1 1"/><path d="M12 13 19 6 21 9 15 14Z" fill="#ddd" stroke="#aaa"/></symbol>
        <symbol id="qext" viewBox="0 0 24 24"><path d="M4 1 15 22M1 16H11" stroke="#999" stroke-width="1.3"/><path d="M11 16 20 4 23 7 14 16Z" fill="#eee" stroke="#999"/></symbol>
        <symbol id="corner" viewBox="0 0 24 24"><path d="M1 9H14V22M5 4 20 17" fill="none" stroke="#999" stroke-width="1.3"/><path d="M14 9H23M14 9V1" stroke="#bbb" stroke-dasharray="1 1"/></symbol>
        <symbol id="rapid" viewBox="0 0 24 24"><path d="M2 6V19M22 6V19M2 12.500H22M5 10 2 12.500 5 15M19 10 22 12.500 19 15" fill="none" stroke="#aaa" stroke-width="1.3"/><path d="M14 2H20L15 9H18L9 19 12 12H9Z" fill="#e5e5e5" stroke="#aaa"/></symbol>
        <symbol id="constr" viewBox="0 0 24 24"><path d="M2 17 9 8M6 17 13 8M17 12V21M11 21.500H22" stroke="#999" stroke-width="1.3"/></symbol>
        <symbol id="symm" viewBox="0 0 24 24"><path d="M6 3H2V21H6M18 3H22V21H18M12 1V23" fill="none" stroke="#888" stroke-width="1.3"/><path d="M7 6H17M9 4 7 6 9 8M15 4 17 6 15 8M7 6V17M17 6V17" fill="none" stroke="#aaa"/></symbol>
        <symbol id="show" viewBox="0 0 24 24"><path d="M1 8 6 12 1 17Z" fill="#aaa"/><path d="M9 11 17 2M14 11 22 2M16 15V23M10 23H22" stroke="#999" stroke-width="1.3"/></symbol>
        <symbol id="convert" viewBox="0 0 24 24"><path d="M2 2H12V11H2ZM11 13H23V23H11Z" fill="none" stroke="#999" stroke-width="1.3"/><path d="M11 15 20 5 23 7 14 17Z" fill="#eee" stroke="#aaa"/><path d="M1 16H8V23H1Z" fill="#eee" stroke="#bbb"/><path d="M3 21 6 18M4 18H6V20" fill="none" stroke="#888"/></symbol>
        <symbol id="model1" viewBox="0 0 24 24"><path d="M9 3Q1 0 2 7T10 9M7 9H11V5" fill="none" stroke="#aaa" stroke-width="1.5"/><path d="M10 11 20 1 23 4 13 13ZM3 15 10 12 20 14V19L10 22 3 19Z" fill="#ddd" stroke="#aaa"/><path d="M15 15H23V22H15ZM17 15V12H21V15" fill="#ccc" stroke="#aaa"/></symbol>
        <symbol id="model2" viewBox="0 0 24 24"><path d="M9 3Q1 0 2 7T10 9M7 9H11V5" fill="none" stroke="#aaa" stroke-width="1.5"/><path d="M2 16 10 12V7L16 6V13L22 16V19L13 23 2 19Z" fill="#ddd" stroke="#bbb"/><path d="M2 16 13 19 22 16" fill="none" stroke="#999"/></symbol>

        <!-- assembly bar -->
        <symbol id="parts" viewBox="0 0 24 24"><path d="M2 3 8 0 14 3V9L22 13V20L16 23 2 20Z" fill="none" stroke="#4450b4"/><use href="#sc" x="3" y="2" width="11" height="11"/><use href="#sc" x="3" y="10" width="11" height="12"/><use href="#sc" x="11" y="11" width="11" height="12"/></symbol>
        <symbol id="win-off" viewBox="0 0 24 24"><path d="M2 3H22V22H2Z" fill="#eee" stroke="#aaa"/><path d="M2 3H22V6H2Z" fill="#bbb"/><use href="#sc" x="5" y="7" width="9" height="8"/><use href="#sc" x="4" y="13" width="9" height="8"/><use href="#sc" x="12" y="13" width="9" height="8"/></symbol>
        <symbol id="addpart" viewBox="0 0 24 24"><use href="#pc" x="1" y="1" width="11" height="11"/><use href="#pc" x="1" y="11" width="11" height="11"/><use href="#pc" x="9" y="11" width="11" height="11"/><path d="M14 5H22M18 1V9" stroke="#2c82e8" stroke-width="2.5"/></symbol>
        <symbol id="movepart" viewBox="0 0 24 24"><use href="#pc" x="6" y="6" width="12" height="12"/><path d="M15 5 18 2H23V7M4 16V21H9" fill="none" stroke="#3476c0" stroke-width="1.5" stroke-dasharray="2 1"/></symbol>
        <symbol id="reflect" viewBox="0 0 24 24"><path d="M3 1 10 6 3 11ZM21 1 14 6 21 11Z" fill="#2633b8"/><path d="M12 0V24" stroke="#333" stroke-dasharray="4 1 1 1"/><path d="M1 14H10V22H1Z" fill="#f7f04a" stroke="#555"/><path d="M14 13 22 22H14Z" fill="#d2302c" stroke="#902020"/></symbol>
        <symbol id="assycon" viewBox="0 0 24 24"><path d="M1 5 7 9 1 14Z" fill="#20a042"/><path d="M2 12 8 17 3 22Z" fill="#d2302c"/><path d="M13 9H24M18 1V9M13 22 19 13M17 22 23 13" stroke="#8c3668" stroke-width="1.5"/></symbol>
        <symbol id="wrench" viewBox="0 0 24 24"><path d="M8 6H13V1H19V6H24V12H13V13H8Z" fill="#e4e88c" stroke="#555"/><path d="M13 6H19V12M13 6V12" fill="none" stroke="#555"/><path d="M1 20 9 13 8 9 13 9 16 12 14 15 11 15 5 22Z" fill="#edcb4e" stroke="#a67c1c"/></symbol>
        <symbol id="three" viewBox="0 0 24 24"><use href="#pc" x="1" y="1" width="11" height="11"/><use href="#pc" x="1" y="12" width="11" height="11"/><use href="#pc" x="12" y="12" width="11" height="11"/></symbol>
        <symbol id="seq" viewBox="0 0 24 24"><path d="M12 2H18V8H12ZM8 8H14V14H8Z" fill="#fff" stroke="#444" stroke-width="1.3"/><path d="M4 15H10V21H4Z" fill="#f5e840" stroke="#d33" stroke-width="1.3"/></symbol>
        <symbol id="cubetag" viewBox="0 0 24 24"><use href="#sc"/><path d="M1 15 12 11 15 14 12 20 1 22Z" fill="#ffe9bc" stroke="#e38b30"/><path d="M3 17 10 14M4 20 11 17" stroke="#e38b30"/><circle cx="13" cy="15" r="1.5" fill="#c33"/></symbol>
        <symbol id="chain" viewBox="0 0 24 24"><ellipse cx="10" cy="7" rx="4" ry="6" fill="none" stroke="#a8982c" stroke-width="3"/><ellipse cx="10" cy="7" rx="4" ry="6" fill="none" stroke="#ece278"/><ellipse cx="14" cy="16" rx="4" ry="6" fill="none" stroke="#a8982c" stroke-width="3"/><ellipse cx="14" cy="16" rx="4" ry="6" fill="none" stroke="#ece278"/></symbol>
        <symbol id="wave" viewBox="0 0 24 24"><path d="M5 2H22V6H5ZM8 2V6" fill="#eee" stroke="#444"/><path d="M5 4H2V11M0 8 2 12 4 8" fill="none" stroke="#333" stroke-width="1.3"/><ellipse cx="15" cy="12" rx="2.5" ry="4" fill="none" stroke="#b3a336" stroke-width="2"/><ellipse cx="18" cy="18" rx="2.5" ry="4" fill="none" stroke="#b3a336" stroke-width="2"/></symbol>
        <symbol id="relinfo" viewBox="0 0 24 24"><path d="M8 12 15 3M8 12H15M8 12 14 18" stroke="#444"/><path d="M0 10H8V13H0ZM14 1H22V4H14ZM14 7H22V10H14Z" fill="#b5c2ee" stroke="#444e90"/><path d="M13 13H23V23H13Z" fill="#e8ecff" stroke="#2a2f9c" stroke-width="1.5"/><path d="M16 17H18V21M16 21H20M17 15H19" stroke="#1c2070" fill="none" stroke-width="1.5"/></symbol>
        <symbol id="wirecubes" viewBox="0 0 24 24"><use href="#sc" x="10" y="1" width="14" height="14"/><use href="#sc" x="1" y="9" width="14" height="14"/><path d="M9 9 14 13M14 9 10 13" stroke="#d33"/></symbol>

        <!-- tree icons -->
        <symbol id="folder" viewBox="0 0 16 16"><path d="M1 3H6L8 5H13V7L4 14H1Z" fill="#f3cb4c" stroke="#94701c"/><path d="M5 7H16L12 14H1Z" fill="#ffe68c" stroke="#94701c"/></symbol>
        <symbol id="assy" viewBox="0 0 16 16"><use href="#yc" x="0" y="0" width="10" height="9"/><use href="#yc" x="0" y="7" width="10" height="9"/><use href="#yc" x="7" y="7" width="9" height="9"/></symbol>
        <symbol id="compat" viewBox="0 0 16 16"><path d="M1 1 5 5 1 8ZM10 1 6 5 10 8Z" fill="#1c2bc0"/><path d="M5.5 0V10" stroke="#222"/><use href="#yc" x="1" y="7" width="7" height="7"/><use href="#yc" x="6" y="8" width="7" height="7"/><use href="#yc" x="10" y="9" width="6" height="7"/></symbol>
        <symbol id="cons" viewBox="0 0 16 16"><path d="M3 0 8 3 3 6ZM13 0 8 3 13 6Z" fill="#1c2bc0"/><path d="M8 0V16" stroke="#222" stroke-dasharray="2 1"/><path d="M.5 9.5H6V15H.5Z" fill="#fff46a" stroke="#555"/><path d="M10 8 15.5 15H10Z" fill="#d22020"/></symbol>
        <symbol id="bolt" viewBox="0 0 18 16"><path d="M.5 5V10L4 14 10 15.5 17 12V5Z" fill="#935900" stroke="#3a2c10" stroke-width=".8"/><path d="M10 9.5 17 6V12L10 15.5Z" fill="#c77700"/><path d="M.5 4.5 4 1.500 11 .5 17 3V6L13 9 6 10 .5 7Z" fill="#ffc900" stroke="#3a2c10" stroke-width=".8"/></symbol>
    </svg>

    <header class="menubar">
        <svg class="menubar__marks" aria-hidden="true"><path d="M22 1H30M68 1H70M73 1H80M107 1H109M112 1H116M121 1H129M170 1H179M219 1H228M269 1H278M318 1H327M368 1H375M415 1H424M481 1H491M531 1H543M644 1H656M1041 0H1050M1058 0H1066" stroke="#222" stroke-width="3"/></svg>
    </header>

    <div class="row">
        <div class="bar">
            <button class="start">启动<i class="caret"></i></button>
            <button class="tool" aria-label="新建"><svg><use href="#new"/></svg></button>
            <button class="tool" aria-label="打开"><svg><use href="#open"/></svg></button>
            <button class="tool" aria-label="保存"><svg><use href="#save"/></svg></button>
            <span class="sep"></span>
            <button class="tool" aria-label="剪切"><svg><use href="#cut"/></svg></button>
            <button class="tool" aria-label="复制"><svg><use href="#copy"/></svg></button>
            <button class="tool" aria-label="粘贴"><svg><use href="#paste"/></svg></button>
            <span class="sep"></span>
            <button class="tool" aria-label="撤消"><svg><use href="#undo"/></svg></button>
            <button class="drop" aria-label="更多"><i class="caret"></i></button>
            <button class="tool" aria-label="重做"><svg><use href="#redo"/></svg></button>
            <span class="sep"></span>
            <button class="tool" aria-label="最近打开"><svg><use href="#open-off"/></svg></button>
            <button class="drop" aria-label="更多"><i class="caret"></i></button>
            <span class="sep"></span>
            <button class="tool" aria-label="信息"><svg><use href="#info"/></svg></button>
            <span class="sep"></span>
            <div class="search">
                <input type="text" value="查找命令" aria-label="查找命令">
                <svg><use href="#find"/></svg>
            </div>
            <button class="drop drop--low" aria-label="选项"><i class="caret"></i></button>
        </div>
        <div class="bar">
            <span class="grip"></span>
            <button class="tool" aria-label="适合窗口"><svg><use href="#fit"/></svg></button>
            <button class="drop" aria-label="更多"><i class="caret"></i></button>
            <button class="tool" aria-label="着色"><svg><use href="#shade"/></svg></button>
            <button class="drop" aria-label="更多"><i class="caret"></i></button>
            <button class="tool" aria-label="视图"><svg><use href="#bc"/></svg></button>
            <button class="drop" aria-label="更多"><i class="caret"></i></button>
            <button class="tool" aria-label="剪切截面"><svg><use href="#clip"/></svg></button>
            <button class="tool" aria-label="编辑截面"><svg><use href="#clip2"/></svg></button>
            <button class="drop" aria-label="更多"><i class="caret"></i></button>
            <button class="tool" aria-label="背景"><svg><use href="#window"/></svg></button>
            <button class="drop" aria-label="更多"><i class="caret"></i></button>
            <span class="sep"></span>
            <button class="tool" aria-label="移动面"><svg><use href="#plane"/></svg></button>
            <button class="tool tool--on" aria-label="动态移动"><svg><use href="#plane-on"/></svg></button>
            <button class="drop drop--low" aria-label="选项"><i class="caret"></i></button>
        </div>
        <div class="bar bar--fill">
            <span class="grip"></span>
            <button class="tool" aria-label="图层设置"><svg><use href="#layers"/></svg></button>
            <button class="tool" aria-label="图层"><svg><use href="#layers"/></svg></button>
            <button class="drop" aria-label="更多"><i class="caret"></i></button>
            <button class="tool" aria-label="坐标系"><svg><use href="#csys"/></svg></button>
            <button class="drop" aria-label="更多"><i class="caret"></i></button>
            <span class="sep"></span>
            <button class="tool" aria-label="显示和隐藏"><svg><use href="#touch"/></svg></button>
        </div>
    </div>

    <div class="row">
        <div class="bar bar--lead">
            <button class="drop" aria-label="更多"><i class="caret"></i></button>
            <button class="tool" aria-label="拉伸"><svg><use href="#extrude"/></svg></button>
            <button class="tool" aria-label="回转"><svg><use href="#revolve"/></svg></button>
            <button class="tool" aria-label="孔"><svg><use href="#hole"/></svg></button>
            <button class="tool" aria-label="凸台"><svg><use href="#boss"/></svg></button>
            <button class="tool" aria-label="键槽"><svg><use href="#slot"/></svg></button>
            <button class="tool" aria-label="凸起"><svg><use href="#emboss"/></svg></button>
            <span class="sep"></span>
            <button class="tool" aria-label="偏置面"><svg><use href="#offset"/></svg></button>
            <button class="tool" aria-label="阵列面"><svg><use href="#pattern"/></svg></button>
            <button class="tool" aria-label="阵列特征"><svg><use href="#array"/></svg></button>
            <button class="tool" aria-label="镜像"><svg><use href="#mirror"/></svg></button>
            <button class="tool" aria-label="求和"><svg><use href="#unite"/></svg></button>
            <button class="drop" aria-label="更多"><i class="caret"></i></button>
            <button class="tool" aria-label="修剪体"><svg><use href="#trim"/></svg></button>
            <button class="drop" aria-label="更多"><i class="caret"></i></button>
            <button class="tool" aria-label="拆分体"><svg><use href="#trim"/></svg></button>
            <button class="tool" aria-label="修剪片体"><svg><use href="#split"/></svg></button>
            <button class="tool" aria-label="分割面"><svg><use href="#divide"/></svg></button>
            <button class="tool" aria-label="抽壳"><svg><use href="#shell"/></svg></button>
            <button class="drop" aria-label="更多"><i class="caret"></i></button>
            <button class="tool" aria-label="偏置"><svg><use href="#shell"/></svg></button>
            <button class="tool" aria-label="加厚"><svg><use href="#thicken"/></svg></button>
            <button class="tool" aria-label="缩放体"><svg><use href="#scale"/></svg></button>
            <span class="sep"></span>
            <button class="tool" aria-label="边倒圆"><svg><use href="#blend"/></svg></button>
            <button class="tool" aria-label="面倒圆"><svg><use href="#face"/></svg></button>
            <button class="tool" aria-label="倒斜角"><svg><use href="#chamfer"/></svg></button>
            <button class="tool" aria-label="拔模"><svg><use href="#draft"/></svg></button>
            <button class="tool" aria-label="体"><svg><use href="#gem"/></svg></button>
            <button class="drop drop--low" aria-label="选项"><i class="caret"></i></button>
        </div>
        <div class="bar">
            <span class="grip"></span>
            <button class="tool" aria-label="直纹"><svg><use href="#ruled"/></svg></button>
            <button class="tool" aria-label="通过曲线网格"><svg><use href="#mesh"/></svg></button>
            <button class="tool" aria-label="N 边曲面"><svg><use href="#nside"/></svg></button>
            <button class="tool" aria-label="扫掠"><svg><use href="#sweep"/></svg></button>
            <button class="tool" aria-label="变化扫掠"><svg><use href="#curves"/></svg></button>
            <button class="tool" aria-label="桥接曲面"><svg><use href="#joins"/></svg></button>
            <button class="drop drop--wide" aria-label="选项">»<i class="caret"></i></button>
        </div>
        <div class="bar bar--fill">
            <span class="grip"></span>
            <button class="tool" aria-label="删除面"><svg><use href="#remove"/></svg></button>
        </div>
    </div>

    <div class="row">
        <div class="bar bar--cut">
            <button class="tool" aria-label="图层类别"><svg><use href="#window"/></svg></button>
            <button class="tool" aria-label="图层组"><svg><use href="#stack"/></svg></button>
            <button class="tool" aria-label="图层列表"><svg><use href="#layers"/></svg></button>
            <span class="sep"></span>
            <button class="tool" aria-label="标签"><svg><use href="#tag"/></svg></button>
            <span class="sep"></span>
            <button class="tool" aria-label="检查部件"><svg><use href="#check1"/></svg></button>
            <button class="tool" aria-label="检查草图"><svg><use href="#check2"/></svg></button>
            <button class="tool" aria-label="检查装配"><svg><use href="#check3"/></svg></button>
            <span class="sep"></span>
            <button class="tool" aria-label="编辑文本"><svg><use href="#abc"/></svg></button>
            <button class="drop drop--low" aria-label="选项"><i class="caret"></i></button>
        </div>
        <div class="bar">
            <span class="grip"></span>
            <button class="tool" aria-label="折弯"><svg><use href="#bend1"/></svg></button>
            <button class="tool" aria-label="成形"><svg><use href="#bend2"/></svg></button>
            <button class="drop drop--chev" aria-label="选项">»<i class="caret"></i></button>
        </div>
        <div class="bar">
            <span class="grip"></span>
            <button class="tool" aria-label="压缩弹簧"><svg><use href="#spring"/></svg></button>
            <button class="tool" aria-label="拉伸弹簧"><svg><use href="#coil"/></svg></button>
            <button class="tool" aria-label="碟形弹簧"><svg><use href="#disc"/></svg></button>
            <span class="sep"></span>
            <button class="tool" aria-label="删除弹簧"><svg><use href="#cutcoil"/></svg></button>
            <button class="drop drop--low" aria-label="选项"><i class="caret"></i></button>
        </div>
        <div class="bar">
            <span class="grip"></span>
            <button class="tool" aria-label="三角形"><svg><use href="#tri"/></svg></button>
            <button class="tool" aria-label="表格"><svg><use href="#table"/></svg></button>
            <button class="tool" aria-label="点集"><svg><use href="#pts"/></svg></button>
            <button class="tool" aria-label="圆集"><svg><use href="#circles"/></svg></button>
            <button class="tool" aria-label="注释"><svg><use href="#note"/></svg></button>
            <button class="tool" aria-label="尺寸"><svg><use href="#dim"/></svg></button>
            <span class="sep"></span>
            <button class="tool" aria-label="公差配合"><svg><use href="#fit10"/></svg></button>
            <button class="drop drop--low" aria-label="选项"><i class="caret"></i></button>
        </div>
        <div class="bar">
            <span class="grip"></span>
            <button class="tool" aria-label="锁定"><svg><use href="#lock"/></svg></button>
            <button class="tool" aria-label="解锁"><svg><use href="#lock"/></svg></button>
            <button class="drop drop--low" aria-label="选项"><i class="caret"></i></button>
        </div>
        <div class="bar bar--fill">
            <span class="grip"></span>
            <button class="tool" aria-label="直线"><svg><use href="#line"/></svg></button>
            <button class="tool" aria-label="圆弧"><svg><use href="#arc"/></svg></button>
            <button class="tool" aria-label="样条"><svg><use href="#spline"/></svg></button>
            <button class="tool" aria-label="偏置曲线"><svg><use href="#loop"/></svg></button>
            <button class="tool" aria-label="在面上偏置"><svg><use href="#midcurve"/></svg></button>
            <button class="tool" aria-label="桥接曲线"><svg><use href="#bridge"/></svg></button>
            <button class="tool" aria-label="投影曲线"><svg><use href="#project"/></svg></button>
            <button class="tool" aria-label="相交曲线"><svg><use href="#section"/></svg></button>
        </div>
    </div>

    <div class="row row--select">
        <select class="combo combo--cut" aria-label="选择过滤器"><option>选择过滤器</option></select>
        <select class="combo" aria-label="选择范围"><option>整个装配</option></select>
        <button class="mini" aria-label="关联"><svg><use href="#gears-off"/></svg></button>
        <span class="sep"></span>
        <button class="mini" aria-label="重置过滤器"><svg><use href="#filter-off"/></svg></button>
        <button class="mini" aria-label="过滤器"><svg><use href="#filter"/></svg></button>
        <button class="drop" aria-label="更多"><i class="caret"></i></button>
        <button class="mini" aria-label="返回"><svg><use href="#back-off"/></svg></button>
        <button class="mini" aria-label="向上一级"><svg><use href="#tree-off"/></svg></button>
        <span class="sep"></span>
        <button class="mini" aria-label="矩形选择"><svg><use href="#marquee"/></svg></button>
        <button class="drop" aria-label="更多"><i class="caret"></i></button>
        <span class="sep"></span>
        <button class="mini" aria-label="隐藏边"><svg><use href="#obj"/></svg></button>
        <button class="mini" aria-label="高亮"><svg><use href="#pick"/></svg></button>
        <div class="snaps">
            <button class="snap snap--on" aria-label="启用捕捉点"><svg><use href="#snap-on"/></svg></button>
            <button class="snap snap--on" aria-label="端点"><svg><use href="#s-end"/></svg></button>
            <button class="snap snap--on" aria-label="中点"><svg><use href="#s-mid"/></svg></button>
            <button class="snap" aria-label="控制点"><svg><use href="#s-ctrl"/></svg></button>
            <button class="snap snap--on" aria-label="极点"><svg><use href="#s-pole"/></svg></button>
            <button class="snap" aria-label="交点"><svg><use href="#s-int"/></svg></button>
            <button class="snap snap--on" aria-label="圆弧中心"><svg><use href="#s-cen"/></svg></button>
            <button class="snap" aria-label="象限点"><svg><use href="#s-quad"/></svg></button>
            <button class="snap snap--on" aria-label="现有点"><svg><use href="#s-pt"/></svg></button>
            <button class="snap snap--on" aria-label="曲线上的点"><svg><use href="#s-on"/></svg></button>
            <button class="snap" aria-label="面上的点"><svg><use href="#s-face"/></svg></button>
        </div>
        <span class="sep"></span>
        <button class="mini" aria-label="栅格点"><svg><use href="#s-grid"/></svg></button>
    </div>

    <main class="work">
        <aside class="nav">
            <div class="nav__title">装配导航器<button class="nav__max" aria-label="最大化"></button></div>
            <div class="tree">
                <div class="tree__head">描述性部件名<i class="sort"></i></div>
                <ul class="tree__list">
                    <li class="node"><button class="fold" aria-label="展开">+</button><i class="dots"></i><label><input type="checkbox"><svg><use href="#folder"/></svg>截面</label></li>
                    <li class="node"><button class="fold" aria-label="折叠">−</button><i class="dots"></i><label><input type="checkbox" checked><svg><use href="#assy"/></svg><b>zhuangpei</b>（顺序</label></li>
                    <li class="node node--sub"><button class="fold" aria-label="展开">+</button><i class="dots"></i><svg><use href="#compat"/></svg>组件图样</li>
                    <li class="node node--sub"><button class="fold" aria-label="展开">+</button><i class="dots"></i><svg><use href="#cons"/></svg>约束</li>
                    <li class="node node--leaf"><i class="dots"></i><label><input type="checkbox" checked><svg><use href="#yc"/></svg>zhijia</label></li>
                    <li class="node node--leaf"><i class="dots"></i><label><input type="checkbox" checked><svg><use href="#yc"/></svg>xiazhuanpan</label></li>
                    <li class="node node--leaf"><i class="dots"></i><label><input type="checkbox" checked><svg><use href="#yc"/></svg>xiazhuanpan</label></li>
                    <li class="node node--leaf"><i class="dots"></i><label><input type="checkbox" checked><svg><use href="#yc"/></svg>gangqiu x 60</label></li>
                    <li class="node node--leaf"><i class="dots"></i><label><input type="checkbox" checked><svg><use href="#yc"/></svg>shangzhuanpan</label></li>
                    <li class="node node--leaf"><i class="dots"></i><label><input type="checkbox" checked><svg><use href="#yc"/></svg>lianjiejian</label></li>
                    <li class="node node--leaf"><i class="dots"></i><label><input type="checkbox" checked><svg><use href="#yc"/></svg>M3luoshuan</label></li>
                    <li class="node node--leaf"><i class="dots"></i><label><input type="checkbox" checked><svg><use href="#yc"/></svg>M3luomu x 2</label></li>
                    <li class="node node--leaf"><i class="dots"></i><label><input type="checkbox" checked><svg><use href="#yc"/></svg>M4luoshuan</label></li>
                    <li class="node node--leaf"><i class="dots"></i><label><input type="checkbox" checked><svg><use href="#yc"/></svg>M4luomu x 6</label></li>
                    <li class="node node--leaf"><i class="dots"></i><label><input type="checkbox" checked><svg><use href="#yc"/></svg>bujian2 x 2</label></li>
                    <li class="node node--leaf"><i class="dots"></i><label><input type="checkbox" checked><svg><use href="#yc"/></svg>xiaozhou x 2</label></li>
                    <li class="node node--leaf"><i class="dots"></i><label><input type="checkbox" checked><svg><use href="#yc"/></svg>chezhou</label></li>
                    <li class="node node--leaf node--last"><i class="dots"></i><label><input type="checkbox" checked><svg><use href="#yc"/></svg>qinang x 2</label></li>
                    <li class="node"></li>
                    <li class="node"></li>
                </ul>
                <div class="scroll">
                    <button aria-label="向左"><svg viewBox="0 0 8 8"><path d="M6 0 2 4 6 8"/></svg></button>
                    <span class="scroll__thumb"></span>
                    <button aria-label="向右"><svg viewBox="0 0 8 8"><path d="M2 0 6 4 2 8"/></svg></button>
                </div>
            </div>
            <div class="nav__foot"></div>
        </aside>

        <section class="view">
            <svg class="model" viewBox="164 144 920 487" preserveAspectRatio="xMinYMin meet" role="img" aria-label="zhuangpei">
                <g stroke="#3a2c10" stroke-width=".8" stroke-linejoin="round">
                    <!-- far end of the centre tube -->
                    <path d="M660 305 689 275 717 286 693 309Z" fill="#ffc900"/>
                    <path d="M693 309 717 286V312L708 320Z" fill="#c77700"/>

                    <!-- right crossbeam and cylinder -->
                    <path d="M655 421 670 411 736 436 723 448Z" fill="#ffc900"/>
                    <path d="M644 417 723 448V465L644 435Z" fill="#935900"/>
                    <path d="M723 448 736 436V453L723 465Z" fill="#c77700"/>
                    <path d="M688 434Q706 448 725 434V430H688Z" fill="url(#cyl)"/>
                    <path d="M683 370 729 345V430Q720 438 706 438T683 430Z" fill="url(#cyl)"/>

                    <!-- left crossbeam -->
                    <path d="M420 451 437 447 640 528 628 540 422 460Z" fill="#ffc900"/>
                    <path d="M422 460 628 540V558L422 479Z" fill="#935900"/>
                    <path d="M628 540 640 528V543L628 558Z" fill="#c77700"/>

                    <!-- centre tube -->
                    <path d="M411 547 538 424 566 434 438 558Z" fill="#ffc900"/>
                    <path d="M438 558 566 433 585 441 438 583Z" fill="#c77700"/>
                    <path d="M411 547 438 558V583L411 572Z" fill="#935900"/>
                    <path d="M415 553 435 561V578L415 571Z" fill="#b06900"/>
                    <path d="M415 571 427 558 435 561V578Z" fill="#ffc900"/>

                    <!-- front cylinder -->
                    <path d="M592 529Q611 541 631 529V524H592Z" fill="url(#cyl)"/>
                    <path d="M588 445H634V525Q626 533 611 533T588 525Z" fill="url(#cyl)"/>
                    <path d="M588 445Q592 458 611 458T633 447Z" fill="#e58a00"/>
                    <path d="M588 519Q592 528 611 530T634 519" fill="none"/>

                    <!-- support leg -->
                    <path d="M425 379 444 386 436 443 434 450 428 444 420 452 419 458 422 460 421 476 426 480 406 498Z" fill="#b06900"/>
                    <path d="M420 451 428 444 434 449 439 448 437 453 425 461Z" fill="#ffc900" stroke="none"/>
                    <path d="M386 353 425 369V379L406 498 386 490Z" fill="#935900"/>
                    <path d="M418 476 421 459V473Z" fill="#ffc900"/>
                    <ellipse cx="401" cy="470" rx="8" ry="8" fill="#e28b00"/>
                    <ellipse cx="399" cy="471" rx="7" ry="8" fill="#bd7000"/>
                    <ellipse cx="399" cy="471" rx="5" ry="6" fill="#a76300"/>

                    <!-- plate -->
                    <path d="M386 353 621 445V455L425 380Z" fill="#935900" stroke="none"/>
                    <path d="M386 353 621 445V455L425 379" fill="none"/>
                    <path d="M621 445 741 328V340L621 455Z" fill="#c77700"/>
                    <path d="M386 353 505 236 741 328 621 445Z" fill="#ffc900"/>
                    <ellipse cx="563.5" cy="339.5" rx="111.5" ry="69.5" fill="none"/>
                    <path d="M500 396A111.5 69.5 0 0 0 675 341" fill="none"/>
                    <path d="M560 272Q567 265 576 272" fill="#ffc900"/>

                    <!-- turntable -->
                    <path d="M480 324V338A83.5 52 0 0 0 647 338V324Z" fill="url(#rim)"/>
                    <ellipse cx="563.5" cy="324" rx="83.5" ry="52" fill="#ffc900"/>
                    <path d="M619 286 622 281" fill="none"/>
                </g>
                <use href="#bolt" x="472" y="296" width="17" height="16"/>
                <use href="#bolt" x="642" y="300" width="17" height="16"/>
                <use href="#bolt" x="638" y="361" width="17" height="16"/>
                <use href="#bolt" x="551" y="390" width="17" height="16"/>
                <use href="#bolt" x="468" y="357" width="17" height="16"/>

                <!-- hinge -->
                <g stroke="#3a2c10" stroke-width=".8" stroke-linejoin="round">
                    <path d="M480 382 486 376 540 391 531 405 480 388Z" fill="#935900"/>
                    <path d="M480 382 486 376 540 391 531 399Z" fill="#ffc900"/>
                    <path d="M494 369 500 367 523 376 523 385 512 408Z" fill="#c77700"/>
                </g>
                <use href="#bolt" x="484" y="370" width="13" height="13"/>
                <use href="#bolt" x="521" y="384" width="15" height="13"/>
                <path d="M493 369 519 378 512 407Q506 413 496 407L495 402Z" fill="#ffb900" stroke="#3a2c10" stroke-width=".8"/>
                <path d="M495 402Q504 408 512 403L511 409Q503 414 496 408Z" fill="#b06900" stroke="#3a2c10" stroke-width=".8"/>
                <g fill="#6e4300" stroke="#3a2c10" stroke-width=".8"><ellipse cx="507" cy="381" rx="3" ry="3"/><ellipse cx="505" cy="391" rx="3" ry="3"/><ellipse cx="502" cy="401" rx="3" ry="2.5"/></g>

                <!-- work coordinate system -->
                <path d="M563 286 566 304 564 326H563L560 304Z" fill="#0a2aa8"/>
                <path d="M561 332 545 351 534 359 541 348Z" fill="#f3a59a"/>
                <path d="M567 331 593 337 611 348 590 343Z" fill="#9ad8a8"/>
                <path d="M590 342 594 338 611 348Z" fill="#5cb078"/>
                <text x="567" y="285" class="axis" fill="#4848d8">ZC</text>
                <text x="535" y="371" class="axis" fill="#c82020">XC</text>
                <text x="596" y="362" class="axis" fill="#289038">YC</text>

                <!-- view triad -->
                <path d="M198 578 208 571 223 577 222 592 213 600 198 594Z" fill="#c8c8c8" fill-opacity=".7" stroke="#999"/>
                <path d="M198 578 213 584 223 577M213 584V600" fill="none" stroke="#999"/>
                <path d="M208 591V572" stroke="#8f98cc"/>
                <path d="M207.5 561 210 566 208 572 205 566Z" fill="#1a2f9f"/>
                <path d="M207 586 198 595" stroke="#d88080"/>
                <path d="M190 601 194 596 198 595 196 599Z" fill="#c83030"/>
                <path d="M213 586 223 590" stroke="#76b676"/>
                <path d="M222 590 228 591 233 595 226 594Z" fill="#238a32"/>
                <text x="204" y="562" class="axis axis--small" fill="#3a48d0">Z</text>
                <text x="186" y="607" class="axis axis--small" fill="#cc2a2a">X</text>
                <text x="234" y="600" class="axis axis--small" fill="#2c9a44">Y</text>
            </svg>
        </section>
    </main>

    <div class="row row--sketch">
        <div class="bar bar--fill">
            <span class="grip"></span>
            <button class="tool" aria-label="草图"><svg><use href="#sketch"/></svg></button>
            <button class="finish" disabled><svg><use href="#flag-off"/></svg>完成草图</button>
            <button class="tool" aria-label="轮廓"><svg><use href="#profile"/></svg></button>
            <button class="tool" aria-label="直线"><svg><use href="#line"/></svg></button>
            <button class="tool" aria-label="圆弧"><svg><use href="#arc"/></svg></button>
            <button class="tool" aria-label="圆"><svg><use href="#circle"/></svg></button>
            <button class="tool" aria-label="圆角"><svg><use href="#fillet-off"/></svg></button>
            <button class="tool" aria-label="倒斜角"><svg><use href="#cham-off"/></svg></button>
            <button class="tool" aria-label="矩形"><svg><use href="#rect"/></svg></button>
            <button class="tool" aria-label="艺术样条"><svg><use href="#spline"/></svg></button>
            <button class="tool" aria-label="点"><svg><use href="#point"/></svg></button>
            <button class="tool" aria-label="偏置曲线"><svg><use href="#loop-off"/></svg></button>
            <button class="drop" aria-label="更多"><i class="caret"></i></button>
            <span class="sep"></span>
            <button class="tool" aria-label="快速修剪"><svg><use href="#qtrim"/></svg></button>
            <button class="tool" aria-label="快速延伸"><svg><use href="#qext"/></svg></button>
            <button class="tool" aria-label="制作拐角"><svg><use href="#corner"/></svg></button>
            <span class="sep"></span>
            <button class="tool" aria-label="快速尺寸"><svg><use href="#rapid"/></svg></button>
            <button class="drop" aria-label="更多"><i class="caret"></i></button>
            <span class="sep"></span>
            <button class="tool" aria-label="几何约束"><svg><use href="#constr"/></svg></button>
            <button class="tool" aria-label="设为对称"><svg><use href="#symm"/></svg></button>
            <button class="tool" aria-label="显示约束"><svg><use href="#show"/></svg></button>
            <button class="drop" aria-label="更多"><i class="caret"></i></button>
            <span class="sep"></span>
            <button class="tool" aria-label="转换参考"><svg><use href="#convert"/></svg></button>
            <button class="tool" aria-label="延迟评估"><svg><use href="#model1"/></svg></button>
            <button class="tool" aria-label="更新模型"><svg><use href="#model2"/></svg></button>
        </div>
    </div>

    <div class="row row--assembly">
        <div class="bar bar--lead bar--end">
            <button class="drop" aria-label="更多"><i class="caret"></i></button>
            <button class="tool" aria-label="查找组件"><svg><use href="#parts"/></svg></button>
            <button class="tool" aria-label="组件预览"><svg><use href="#win-off"/></svg></button>
            <button class="tool" aria-label="添加组件"><svg><use href="#addpart"/></svg></button>
            <button class="drop" aria-label="更多"><i class="caret"></i></button>
            <button class="tool" aria-label="移动组件"><svg><use href="#movepart"/></svg></button>
            <button class="tool" aria-label="镜像装配"><svg><use href="#reflect"/></svg></button>
            <button class="tool" aria-label="装配约束"><svg><use href="#assycon"/></svg></button>
            <span class="sep"></span>
            <button class="tool" aria-label="替换组件"><svg><use href="#wrench"/></svg></button>
            <button class="tool" aria-label="阵列组件"><svg><use href="#three"/></svg></button>
            <button class="tool" aria-label="装配序列"><svg><use href="#seq"/></svg></button>
            <span class="sep"></span>
            <button class="tool" aria-label="产品接口"><svg><use href="#cubetag"/></svg></button>
            <span class="sep"></span>
            <button class="tool" aria-label="几何链接器"><svg><use href="#chain"/></svg></button>
            <button class="tool" aria-label="部件间链接"><svg><use href="#wave"/></svg></button>
            <button class="tool" aria-label="关系浏览器"><svg><use href="#relinfo"/></svg></button>
            <span class="sep"></span>
            <button class="tool" aria-label="装配间隙"><svg><use href="#wirecubes"/></svg></button>
            <button class="drop" aria-label="更多"><i class="caret"></i></button>
            <button class="drop drop--low" aria-label="选项"><i class="caret"></i></button>
        </div>
    </div>

    <footer class="status">
        <svg viewBox="0 0 16 16"><use href="#flag-off"/></svg>
        <svg viewBox="0 0 16 16"><path d="M1 5V1H4M12 1H15V5" fill="none" stroke="#777"/><path d="M4 4H13V13H4Z" fill="#fff" stroke="#444" stroke-width="1.5"/><path d="M5 6H12V12H5Z" fill="#4f8ad4"/></svg>
    </footer>
</body>

</html>
```

FILE: styles.css
```css
* {
    box-sizing: border-box;
}

body {
    margin: 0;
    height: 100vh;
    display: flex;
    flex-direction: column;
    overflow: hidden;
    background: #fff;
    color: #1a1a1a;
    font: 12px/20px "Noto Sans", "Noto Sans CJK SC", sans-serif;
}

button, input, select {
    margin: 0;
    padding: 0;
    border: 0;
    background: none;
    color: inherit;
    font: inherit;
}
svg {
    display: block;
    flex: none;
}
.sprite {
    width: 0;
    height: 0;
}
.abc {
    font: bold 6px "Liberation Serif", serif;
}
.fit {
    font: 10px "Liberation Sans", sans-serif;
}

/* toolbars */
.menubar {
    flex: none;
    height: 10px;
    background: #c8d7d5;
}
.menubar__marks {
    width: 100%;
    height: 3px;
}
.row {
    flex: none;
    display: flex;
    height: 34px;
    border-bottom: 1px solid #dcdcdc;
    overflow: hidden;
}
.bar {
    flex: none;
    display: flex;
    align-items: center;
}
.bar + .bar {
    border-left: 1px solid #dcdcdc;
}
.bar--fill {
    flex: 1;
}
.bar--lead {
    padding-left: 6px;
}
.bar--cut {
    margin-left: -25px;
}
.bar--end {
    border-right: 1px solid #dcdcdc;
}
.grip {
    width: 3px;
    height: 26px;
    margin: 0 3px;
    background: repeating-linear-gradient(#b5b5b5 0 2px, #fff 2px 4px);
}
.tool {
    flex: none;
    width: 31px;
    height: 30px;
    padding: 0 3px 0 4px;
}
.tool svg, .finish svg {
    width: 24px;
    height: 24px;
}
.tool--on {
    background: #c8d7d5;
    border: 1px solid #a9c3c0;
    padding: 0 2px 0 3px;
}
.sep {
    flex: none;
    width: 1px;
    height: 26px;
    margin: 0 3px 0 2px;
    background: #d4d4d4;
}
.drop {
    flex: none;
    width: 12px;
    height: 28px;
}
.caret {
    display: block;
    width: 0;
    margin: 0 auto;
    border: 3px solid transparent;
    border-top-color: #111;
    border-bottom: 0;
}
.drop--low {
    padding-top: 12px;
}
.search + .drop--low {
    margin: 0 1px 0 5px;
}
.drop--wide, .drop--chev {
    width: 22px;
    padding-bottom: 3px;
    font-size: 16px;
    line-height: 16px;
}
.drop--chev {
    width: 16px;
}
.start {
    flex: none;
    display: flex;
    align-items: center;
    width: 40px;
    padding-left: 5px;
    border-left: 1px solid #e3a02c;
    line-height: 16px;
    white-space: nowrap;
}
.start .caret {
    margin: 0 0 0 2px;
}
.search {
    display: flex;
    align-items: center;
    width: 125px;
    height: 20px;
    margin-left: 3px;
    border: 1px solid #a8a8a8;
}
.search input {
    flex: 1;
    min-width: 0;
    height: 18px;
    padding-left: 1px;
}
.search svg {
    width: 16px;
    height: 16px;
    margin-right: 2px;
}

/* selection bar */
.row--select {
    height: 31px;
    align-items: center;
    border-bottom: 0;
}
.combo {
    flex: none;
    width: 140px;
    height: 20px;
    margin: 0 5px 0 7px;
    padding-left: 2px;
    border: 1px solid #a8a8a8;
    appearance: none;
    background: linear-gradient(#111, #111) no-repeat right 6px top 8px / 7px 1px,
        linear-gradient(#111, #111) no-repeat right 7px top 9px / 5px 1px,
        linear-gradient(#111, #111) no-repeat right 8px top 10px / 3px 1px,
        linear-gradient(#111, #111) no-repeat right 9px top 11px / 1px 1px;
    line-height: 18px;
}
.combo--cut {
    width: 111px;
    margin: 0 0 0 -6px;
}
.mini {
    flex: none;
    width: 22px;
    height: 23px;
    padding: 0 2px;
}
.mini svg, .snap svg {
    width: 18px;
    height: 18px;
}
.snaps {
    display: flex;
    margin-left: 10px;
}
.snap {
    width: 23px;
    height: 23px;
    padding: 0 1px;
    border: 1px solid transparent;
}
.snap--on {
    border-color: #a9c3c0;
    background: #c8d7d5;
}

/* navigator */
.work {
    flex: 1;
    min-height: 0;
    display: flex;
    border-top: 1px solid #8b8d90;
}
.nav {
    flex: none;
    width: 164px;
    padding: 0 10px 5px 5px;
    display: flex;
    flex-direction: column;
    border-right: 1px solid #8b8d90;
}
.nav__title {
    flex: none;
    display: flex;
    align-items: center;
    justify-content: space-between;
    height: 29px;
    padding: 0 7px 0 4px;
}
.nav__max {
    width: 12px;
    height: 11px;
    border: 1px solid #111;
    border-top-width: 2px;
}
.tree {
    flex: 1;
    min-height: 0;
    display: flex;
    flex-direction: column;
    padding: 0 1px;
    border: 1px solid #d5d5d5;
}
.tree__head {
    flex: none;
    display: flex;
    align-items: center;
    height: 21px;
    padding-left: 6px;
    background: #eee;
    border-bottom: 1px solid #dcdcdc;
}
.sort {
    margin-left: 18px;
    border: 5px solid transparent;
    border-top: 0;
    border-bottom-color: #111;
}
.tree__list {
    flex: 1;
    min-height: 0;
    margin: 0;
    padding: 0;
    overflow: hidden;
    list-style: none;
}
.node {
    display: flex;
    align-items: center;
    height: 20px;
    padding-left: 5px;
    border-bottom: 1px solid #ececec;
    white-space: nowrap;
}
.node:nth-child(even) {
    background: #fafafa;
}
.node label {
    flex: none;
    display: flex;
    align-items: center;
}
.node svg {
    width: 15px;
    height: 15px;
    margin: 0 4px 0 2px;
}
.node--sub {
    padding-left: 23px;
}
.node--sub svg {
    margin-left: 0;
}
.fold {
    flex: none;
    width: 9px;
    height: 9px;
    border: 1px solid #c8c8c8;
    background: #fff;
    font-size: 10px;
    line-height: 6px;
}
.dots {
    flex: none;
    width: 5px;
    height: 1px;
    margin: 0 1px;
    border-top: 1px dotted #aaa;
}
.node--leaf {
    padding-left: 28px;
}
.node--leaf .dots {
    width: 9px;
    height: 20px;
    margin: 0 3px 0 0;
    border-top: 0;
    border-left: 1px dotted #999;
    background: repeating-linear-gradient(90deg, #aaa 0 1px, transparent 1px 2px) no-repeat 0 10px / 9px 1px;
}
.node--last .dots {
    height: 10px;
    margin-bottom: 10px;
    background-position: 0 9px;
}
.node input {
    flex: none;
    width: 12px;
    height: 12px;
    border: 1px solid #000;
    background: #fff;
    appearance: none;
}
.node input:checked::after {
    content: "";
    display: block;
    width: 10px;
    height: 10px;
    background: #e01020;
    clip-path: polygon(5% 40%, 28% 38%, 42% 58%, 88% 0, 100% 12%, 45% 100%, 30% 96%);
}
.scroll {
    flex: none;
    display: flex;
    align-items: center;
    height: 17px;
    margin-bottom: 2px;
    background: #f0f0f0;
}
.scroll button {
    width: 17px;
    padding-left: 4px;
}
.scroll button:last-child {
    margin-left: auto;
}
.scroll svg {
    width: 8px;
    height: 8px;
    fill: none;
    stroke: #444;
    stroke-width: 2;
}
.scroll__thumb {
    width: 28px;
    height: 15px;
    background: #cdcdcd;
}
.nav__foot {
    flex: none;
    height: 5px;
    border: 1px solid #b5b5b5;
    background: #ddd;
}

/* graphics window */
.view {
    flex: 1;
    min-width: 0;
    overflow: hidden;
    background: linear-gradient(#b6b7b9, #c3c4c6 18%, #d7d8da 52%, #e5e7e9 80%, #e7e9eb);
}
.model {
    width: 100%;
    height: 100%;
}
.axis {
    font: 12px "Noto Sans", sans-serif;
}
.axis--small {
    font-size: 10px;
}

/* lower toolbars */
.row--sketch {
    padding-left: 282px;
    border-top: 1px solid #e6e6e6;
    height: 35px;
}
.row--sketch .bar {
    border-left: 1px solid #dcdcdc;
}
.row--sketch .grip {
    margin: 0 1px 0 2px;
}
.finish {
    flex: none;
    display: flex;
    align-items: center;
    width: 79px;
    padding-left: 4px;
    color: #b8b8b8;
    font-size: 11px;
    white-space: nowrap;
}
.finish svg {
    margin-right: 4px;
    border: 1px solid #aaa;
}
.row--assembly {
    height: 35px;
    border-bottom-color: #aaa;
}
.status {
    flex: none;
    display: flex;
    justify-content: flex-end;
    gap: 4px;
    height: 11px;
    padding: 2px 44px 0 0;
    overflow: hidden;
}
.status svg {
    width: 16px;
    height: 16px;
}
```
